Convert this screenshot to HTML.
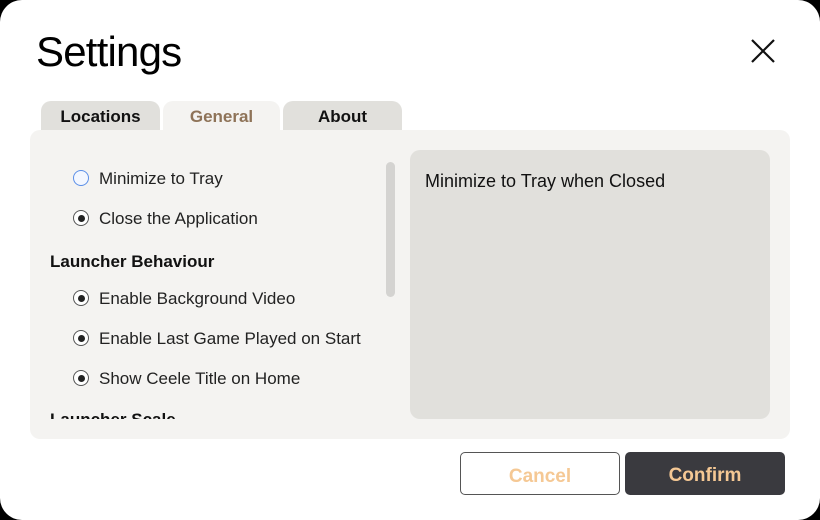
<!DOCTYPE html>
<html><head><style>
html,body{margin:0;padding:0;width:820px;height:520px;background:#000;overflow:hidden;font-family:"Liberation Sans",sans-serif;}
.card{position:absolute;left:0;top:0;width:820px;height:520px;background:#fff;border-radius:22px;}
h1{position:absolute;left:36px;top:28px;margin:0;font-size:42px;font-weight:normal;color:#000;letter-spacing:-0.8px;}
.close{position:absolute;left:750px;top:38px;}
.tab{position:absolute;top:101px;height:32px;border-radius:10px 10px 0 0;background:#e1e0dc;font-weight:bold;font-size:17px;text-align:center;line-height:32px;color:#111;}
.panel{position:absolute;left:30px;top:130px;width:760px;height:309px;background:#f4f3f1;border-radius:10px;}
.scroll{position:absolute;left:30px;top:140px;width:350px;height:279px;overflow:hidden;}
.h{position:absolute;left:20px;font-weight:bold;font-size:17px;color:#111;}
.r{position:absolute;left:69px;font-size:17px;color:#222;}
.c{position:absolute;left:43px;width:14px;height:14px;border-radius:50%;border:1.5px solid #555;background:#fff;}
.c.on::after{content:"";position:absolute;left:3.5px;top:3.5px;width:7px;height:7px;border-radius:50%;background:#222;}
.c.blue{border-color:#5b8fe8;background:#f3f7ff;}
.bar{position:absolute;left:386px;top:162px;width:9px;height:135px;background:#d4d3d1;border-radius:5px;}
.desc{position:absolute;left:410px;top:150px;width:360px;height:269px;background:#e1e0dc;border-radius:10px;}
.desc span{position:absolute;left:15px;top:21px;font-size:18px;color:#111;}
.btn{position:absolute;top:452px;width:158px;height:43px;border-radius:5px;font-weight:bold;font-size:19px;color:#f5c894;text-align:center;line-height:47px;box-sizing:border-box;}
</style></head><body>
<div class="card">
<h1>Settings</h1>
<svg class="close" width="26" height="26" viewBox="0 0 26 26"><path d="M2 2L24 24M24 2L2 24" stroke="#111" stroke-width="2.2"/></svg>
<div class="tab" style="left:41px;width:119px">Locations</div>
<div class="tab" style="left:163px;width:117px;background:#f4f3f1;color:#8e7358">General</div>
<div class="tab" style="left:283px;width:119px">About</div>
<div class="panel"></div>
<div class="scroll">
<div class="c blue" style="top:30px"></div><div class="r" style="top:29px">Minimize to Tray</div>
<div class="c on" style="top:70px"></div><div class="r" style="top:69px">Close the Application</div>
<div class="h" style="top:112px">Launcher Behaviour</div>
<div class="c on" style="top:150px"></div><div class="r" style="top:149px">Enable Background Video</div>
<div class="c on" style="top:190px"></div><div class="r" style="top:189px">Enable Last Game Played on Start</div>
<div class="c on" style="top:230px"></div><div class="r" style="top:229px">Show Ceele Title on Home</div>
<div class="h" style="top:270px">Launcher Scale</div>
</div>
<div class="bar"></div>
<div class="desc"><span>Minimize to Tray when Closed</span></div>
<div class="btn" style="left:460px;width:160px;border:1px solid #555;background:#fff">Cancel</div>
<div class="btn" style="left:625px;width:160px;background:#3a3a3f">Confirm</div>
</div>
</body></html>
